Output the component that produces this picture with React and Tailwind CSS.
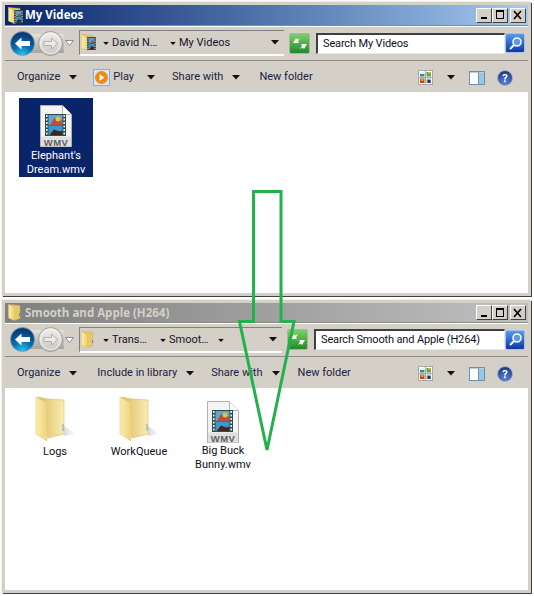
import React from "react";

const Caret = ({ className = "" }) => (
  <svg width="8" height="5" viewBox="0 0 8 5" className={`shrink-0 ${className}`}><path d="M0 0h8L4 4.500z" fill="#111" /></svg>
);

const Film = ({ w = 9, h = 13 }) => (
  <svg width={w} height={h} viewBox="0 0 14 18" preserveAspectRatio="none" className="block">
    <rect width="14" height="18" fill="#2d4a4a" />
    <rect x="3" y="1.500" width="8" height="7" fill="#5aa0d0" />
    <rect x="3" y="9.500" width="8" height="7" fill="#3a90c8" />
    <path d="M5 8.500l3-4 3 2v2z" fill="#b04a20" />
    <path d="M4 16.500l3-4 4 2v2z" fill="#402018" />
    {[1.500, 5, 8.500, 12, 15].map((y) => (
      <g key={y}><rect x=".8" y={y} width="1.500" height="1.700" fill="#e0e8e0" /><rect x="11.700" y={y} width="1.500" height="1.700" fill="#e0e8e0" /></g>
    ))}
  </svg>
);

const SmallFolder = ({ film }) => (
  <span className="relative w-[18px] h-[17px] shrink-0 block">
    <svg width="14" height="17" viewBox="0 0 14 17" className="block ml-[1px]">
      <defs><linearGradient id="sf" x1="0" x2="1"><stop offset="0" stopColor="#fdeea8" /><stop offset="1" stopColor="#ecd070" /></linearGradient></defs>
      <path d="M1 .5l11 1v13l-6 2z" fill="#e6c868" stroke="#cdae58" strokeWidth=".5" />
      <path d="M.5.5l6 3v13l-6-2.500z" fill="url(#sf)" stroke="#dcbe64" strokeWidth=".5" />
      {!film && <rect x="11" y="9" width="1" height="3" fill="#5a90c8" />}
    </svg>
    {film && <span className="absolute left-[7px] top-[3px] block"><Film /></span>}
  </span>
);

const BackBtn = () => (
  <svg width="25" height="25" viewBox="0 0 25 25" className="block">
    <defs><radialGradient id="bb" cx=".5" cy=".98" r=".85"><stop offset="0" stopColor="#2cc8f4" /><stop offset=".5" stopColor="#0a6cae" /><stop offset="1" stopColor="#0a3c78" /></radialGradient></defs>
    <circle cx="12.500" cy="12.500" r="12" fill="url(#bb)" stroke="#7c9ab0" strokeWidth=".8" />
    <path d="M5 12.500l6.500-6v3.500H20v5h-8.500v3.500z" fill="#fff" />
  </svg>
);

const FwdBtn = () => (
  <svg width="25" height="25" viewBox="0 0 25 25" className="block">
    <defs><linearGradient id="fb" x1="0" y1="0" x2="0" y2="1"><stop offset="0" stopColor="#f0f0f0" /><stop offset="1" stopColor="#c8c6c0" /></linearGradient></defs>
    <circle cx="12.500" cy="12.500" r="12" fill="url(#fb)" stroke="#9c9c98" />
    <circle cx="12.500" cy="12.500" r="10" fill="none" stroke="#f4f4f4" />
    <path d="M19.500 12.500l-6-5.500v3.500H6v4h7.500V18z" fill="#ecebe8" stroke="#a5a5a0" strokeWidth=".8" />
  </svg>
);

const NavGroup = () => (
  <div className="flex items-center w-[68px] h-[25px] relative shrink-0">
    <div className="absolute left-[8px] top-[3px] w-[46px] h-[19px] bg-gradient-to-b from-[#e4e2de] to-[#a8a6a0]" />
    <div className="relative flex gap-[3px]"><BackBtn /><FwdBtn /></div>
    <svg width="9" height="6" viewBox="0 0 9 6" className="relative ml-[2px]"><path d="M.5.5h8L4.500 5.500z" fill="#fff" stroke="#8a8c90" /></svg>
  </div>
);

const Refresh = () => (
  <div className="w-[21px] h-[21px] shrink-0 rounded-[2px] border border-[#a4b8a0] bg-gradient-to-b from-[#7bcf6a] to-[#1f8a2a] flex items-center justify-center">
    <svg width="16" height="13" viewBox="0 0 16 13"><path d="M1 6l3-5 1.500 1.500L8 1 6 4.500 7 6H1zM15 7l-3 5-1.500-1.500L8 12l2-3.500L9 7h6z" fill="#f4f8f0" /></svg>
  </div>
);

const SearchBtn = () => (
  <div className="w-[20px] h-[20px] shrink-0 rounded-[2px] border border-[#a8c0e8] bg-gradient-to-b from-[#5a9ae8] to-[#0c38a8] flex items-center justify-center">
    <svg width="15" height="15" viewBox="0 0 15 15"><circle cx="9" cy="6" r="4" fill="#5f9ae8" stroke="#f4f8ff" strokeWidth="1.600" /><path d="M6 9l-4 4" stroke="#f4f8ff" strokeWidth="2.200" /></svg>
  </div>
);

const Play = () => (
  <div className="w-[17px] h-[17px] border border-[#7fb0e0] bg-[#d6e6f4] flex items-center justify-center shrink-0">
    <svg width="13" height="13" viewBox="0 0 14 14"><circle cx="7" cy="7" r="7" fill="#f08a10" /><path d="M5 3.500l5 3.500-5 3.500z" fill="#fff" /></svg>
  </div>
);

const Views = () => (
  <svg width="15" height="15" viewBox="0 0 15 15" className="block">
    <rect x=".5" y=".5" width="14" height="14" fill="#fff" stroke="#a8a8a4" />
    <path d="M7.500 1v13M1 7.500h13" stroke="#a8a8a4" />
    <rect x="2" y="2" width="4.500" height="4.500" fill="#e8f0f0" /><rect x="2" y="4" width="4.500" height="2.500" fill="#2f8a88" />
    <rect x="8.500" y="2" width="4.500" height="4.500" fill="#5fa048" /><rect x="10" y="2" width="3" height="2" fill="#c8b040" />
    <rect x="2" y="8.500" width="4.500" height="4.500" fill="#c04020" /><rect x="3" y="9" width="2.500" height="2" fill="#e0a020" />
    <rect x="8.500" y="8.500" width="4.500" height="4.500" fill="#9ab0c8" /><rect x="9.500" y="10" width="3" height="3" fill="#283848" />
  </svg>
);

const Pane = () => (
  <svg width="16" height="14" viewBox="0 0 16 14" className="block">
    <rect x=".5" y=".5" width="15" height="13" fill="#fff" stroke="#6f8ea8" />
    <rect x="10" y="1" width="5" height="12" fill="#98c8e4" />
    <path d="M1 1.500h14" stroke="#b8d0e0" />
    <path d="M9.500 1v12" stroke="#6f8ea8" />
  </svg>
);

const Help = () => (
  <svg width="16" height="16" viewBox="0 0 16 16" className="block">
    <defs><radialGradient id="hg" cx=".5" cy=".8" r=".7"><stop offset="0" stopColor="#5a88d8" /><stop offset="1" stopColor="#21408c" /></radialGradient></defs>
    <circle cx="8" cy="8" r="7.500" fill="url(#hg)" stroke="#a8b0c0" />
    <path d="M5.500 6.200C5.500 4.500 6.700 4 8 4c1.500 0 2.600.8 2.600 2 0 1.800-2 1.800-2 3.500H7.100c0-2.200 1.800-2.300 1.800-3.500 0-.5-.4-.8-1-.8-.6 0-1 .3-1 .8z" fill="#fff" />
    <rect x="7.100" y="10.300" width="1.600" height="1.700" fill="#fff" />
  </svg>
);

const WindowBtn = ({ children, className = "" }) => (
  <div className={`h-[15px] bg-[#d4d0c8] border border-t-white border-l-white border-r-[#404040] border-b-[#404040] flex items-center justify-center ${className}`}>{children}</div>
);

const Caption = () => (
  <div className="flex items-center mr-[2px]">
    <WindowBtn className="w-[16px]"><svg width="12" height="10" viewBox="0 0 12 10"><rect x="3" y="7" width="6" height="2" fill="#000" /></svg></WindowBtn>
    <WindowBtn className="w-[16px]"><svg width="12" height="10" viewBox="0 0 12 10"><path d="M2 0h8v9H2zM3 2v6h6V2z" fill="#000" fillRule="evenodd" /></svg></WindowBtn>
    <WindowBtn className="w-[16px] ml-[2px]"><svg width="12" height="10" viewBox="0 0 12 10"><path d="M2 1l7 8M9 1L2 9" stroke="#000" strokeWidth="1.600" /></svg></WindowBtn>
  </div>
);

const Crumb = ({ children, w }) => (
  <span className="flex items-center gap-[2px]"><Caret className="scale-75" /><span className={w}>{children}</span></span>
);

const Tool = ({ label, gap = "gap-[9px]", icon, className = "" }) => (
  <div className={`flex items-center ${gap} ${className}`}>
    {icon ? <span className="flex items-center gap-[3px]">{icon}<span>{label}</span></span> : <span>{label}</span>}
    <Caret />
  </div>
);

const WmvIcon = () => (
  <svg width="32" height="42" viewBox="0 0 32 42" className="block">
    <path d="M.5.5h22l9 9v32H.5z" fill="#f4f4f4" stroke="#b0b0b0" />
    <path d="M22.500.5v9h9" fill="#fff" stroke="#b8b8b8" />
    <rect x="5" y="9" width="21" height="22" fill="#2c4a48" />
    <rect x="8.500" y="10" width="14" height="10" fill="#58a8d8" />
    <rect x="8.500" y="20.500" width="14" height="10" fill="#3a98d0" />
    <path d="M10 20l4-7 4 1 4.500 2v4z" fill="#b8503a" />
    <circle cx="18" cy="14" r="2.500" fill="#e8c040" />
    <path d="M9 30.500l5-6 5 2 3.500-1v5z" fill="#402820" />
    {[10, 13.500, 17, 20.500, 24, 27.500].map((y) => (
      <g key={y}><rect x="6" y={y} width="1.600" height="2" fill="#e8f0e8" /><rect x="23.400" y={y} width="1.600" height="2" fill="#e8f0e8" /></g>
    ))}
    <rect x="1" y="31.500" width="30" height="10" fill="#e0e0e0" />
    <text x="16" y="40.500" textAnchor="middle" fontFamily="'Liberation Sans', sans-serif" fontSize="9.500" fontWeight="700" fill="#606060" letterSpacing=".4">WMV</text>
  </svg>
);

const BigFolder = () => (
  <svg width="44" height="46" viewBox="-2 0 44 46" className="block">
    <defs>
      <linearGradient id="bf1" x1="0" x2="1"><stop offset="0" stopColor="#fdeeaa" /><stop offset="1" stopColor="#efd27c" /></linearGradient>
      <linearGradient id="bf2" x1="0" x2="1"><stop offset="0" stopColor="#d8ba62" /><stop offset="1" stopColor="#fbecb0" /></linearGradient>
      <linearGradient id="bf3" x1="0" x2="1"><stop offset="0" stopColor="#000" stopOpacity=".14" /><stop offset="1" stopColor="#000" stopOpacity="0" /></linearGradient>
    </defs>
    <path d="M29 30l12 8-12 2z" fill="url(#bf3)" />
    <path d="M2 1l11 2 16 1v34l-16 4z" fill="url(#bf2)" stroke="#dcc278" strokeWidth=".7" />
    <path d="M1 1l10 6 1 38L1 38z" fill="url(#bf1)" stroke="#e8d088" strokeWidth=".7" />
    <rect x="27.500" y="28" width="1" height="7" fill="#6aa8e0" />
  </svg>
);

const Item = ({ icon, children, selected, className = "" }) => (
  <div className={`flex flex-col items-center text-center leading-[14px] ${selected ? "bg-[#0a246a] text-white" : ""} ${className}`}>
    {icon}
    {children}
  </div>
);

const Window = ({ title, active, icon, crumbs, search, tools, children, className, titleH, addrH, addrW }) => (
  <div className={`flex flex-col border-[3px] border-[#d4d0c8] shadow-[1px_1px_0_#404040,-1px_-1px_0_#f0eee8] ml-[2px] w-[529px] ${className}`}>
    <div className={`${titleH} shrink-0 flex items-center pl-[2px] bg-gradient-to-r ${active ? "from-[#0a246a] to-[#a6caf0] text-white" : "from-[#808080] to-[#c0c0c0] text-[#d4d0c8]"}`}>
      {icon}
      <span className="font-bold text-[11.500px] leading-none" style={{ fontFamily: "'Open Sans', sans-serif" }}>{title}</span>
      <span className="flex-1" />
      <Caption />
    </div>
    <div className={`${addrH} shrink-0 border-y border-[#8a8a86] flex items-center pl-[5px] pr-[3px] bg-[#d4d0c8] shadow-[inset_0_1px_0_#fff]`}>
      <NavGroup />
      <div className={`${addrW} ml-[1px] h-[26px] shrink-0 bg-[#d4d0c8] border-l border-t border-l-[#808080] border-t-[#808080] border-b-2 border-b-white flex items-center pr-[5px] text-[#14142a]`}>
        {icon}
        <div className="flex items-center gap-[8px] ml-[4px] pt-[2px]">{crumbs}</div>
        <span className="flex-1" />
        <Caret />
      </div>
      <span className="ml-[5px] flex"><Refresh /></span>
      <div className="flex items-center flex-1 justify-end">
        <div className={`h-[21px] bg-white border-l-2 border-t-2 border-l-[#404040] border-t-[#404040] border-r border-b border-r-[#e8e8e8] border-b-[#e8e8e8] flex items-center pl-[5px] pt-[1px] text-[#101018] tracking-[-0.15px] ${search.w}`}>{search.text}</div>
        <SearchBtn />
      </div>
    </div>
    <div className="h-[31px] shrink-0 bg-[#d4d0c8] flex items-center pl-[12px] pr-[15px] pt-[2px] text-[#1a2040]">
      <div className="flex items-center gap-[20px]">{tools}</div>
      <span className="flex-1" />
      <div className="flex items-center">
        <Views /><Caret className="ml-[14px]" /><span className="ml-[14px]"><Pane /></span><span className="ml-[12px]"><Help /></span>
      </div>
    </div>
    <div className="flex-1 bg-white text-[#101020]">{children}</div>
  </div>
);

export default function App() {
  return (
    <div className="relative w-[534px] h-[596px] bg-white overflow-hidden pt-[2px] text-[11px]" style={{ fontFamily: "Roboto, 'Open Sans', sans-serif" }}>
      <Window
        active
        className="h-[294px]"
        titleH="h-[20px]"
        addrH="h-[36px]"
        addrW="w-[205px]"
        title="My Videos"
        icon={<SmallFolder film />}
        crumbs={<><Crumb w="w-[49px]">David N…</Crumb><Crumb>My Videos</Crumb></>}
        search={{ w: "w-[189px]", text: "Search My Videos" }}
        tools={<>
          <Tool label="Organize" />
          <Tool label="Play" icon={<Play />} gap="gap-[13px]" className="-ml-[4px]" />
          <Tool label="Share with" className="-ml-[3px]" />
          <span className="-ml-[1px]">New folder</span>
        </>}
      >
        <div className="flex pt-[6px] pl-[14px]">
          <Item selected className="w-[74px] h-[79px] pt-[7px]" icon={<WmvIcon />}>
            <span className="mt-[2px]">Elephant's<br />Dream.wmv</span>
          </Item>
        </div>
      </Window>
      <Window
        className="h-[293px] mt-[4px]"
        titleH="h-[19px]"
        addrH="h-[35px]"
        addrW="w-[203px]"
        title="Smooth and Apple (H264)"
        icon={<SmallFolder />}
        crumbs={<><Crumb w="w-[39px]">Trans…</Crumb><Crumb w="w-[40px]">Smoot…</Crumb><Caret className="scale-75" /></>}
        search={{ w: "w-[191px]", text: "Search Smooth and Apple (H264)" }}
        tools={<>
          <Tool label="Organize" />
          <Tool label="Include in library" />
          <Tool label="Share with" className="-ml-[3px]" />
          <span className="-ml-[2px]">New folder</span>
        </>}
      >
        <div className="flex pt-[8px] pl-[8px]">
          <Item className="w-[84px]" icon={<BigFolder />}><span className="mt-[3px]">Logs</span></Item>
          <Item className="w-[84px]" icon={<BigFolder />}><span className="mt-[3px]">WorkQueue</span></Item>
          <Item className="w-[84px]" icon={<span className="block mt-[5px]"><WmvIcon /></span>}><span className="mt-[1px]">Big Buck<br />Bunny.wmv</span></Item>
        </div>
      </Window>
      <svg className="absolute left-0 top-0 pointer-events-none" width="534" height="596" viewBox="0 0 534 596">
        <path d="M253.500 191.500H281V321.500H294L267 450 239.500 321.500H253.500z" fill="none" stroke="#22b14c" strokeWidth="3" />
      </svg>
    </div>
  );
}
